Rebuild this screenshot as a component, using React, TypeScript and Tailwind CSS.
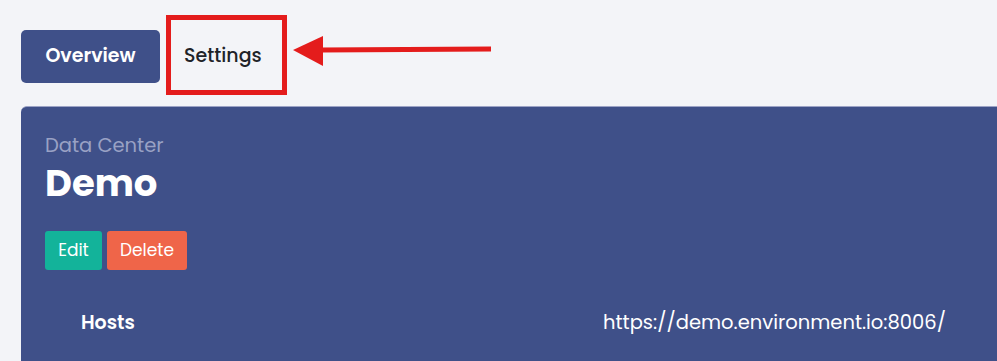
export default function App() {
  return (
    <div
      className="relative h-[361px] w-full overflow-hidden bg-[#f3f4f8]"
      style={{ fontFamily: '"Poppins", "Inter", "Open Sans", sans-serif' }}
    >
      {/* tabs */}
      <div className="flex items-center pl-[21px] pt-[30px]">
        <button className="h-[53px] w-[139px] rounded-[5px] bg-[#3f5089] text-[19px] font-semibold text-white">
          Overview
        </button>
        <button className="h-[53px] pl-[24px] text-[19px] font-medium text-[#1f2328]">
          Settings
        </button>
      </div>

      {/* annotation */}
      <div className="absolute left-[166px] top-[15px] h-[80px] w-[121px] border-[5px] border-[#e41c1c]" />
      <svg className="absolute left-[293px] top-[35px]" width="200" height="32" viewBox="0 0 200 32">
        <line x1="28" y1="15" x2="198" y2="14" stroke="#e41c1c" strokeWidth="5" />
        <polygon points="0,15 30,1 30,31" fill="#e41c1c" />
      </svg>

      {/* card */}
      <div className="ml-[21px] mt-[23px] w-[1000px] rounded-tl-[6px] border-t border-[#9ca3c6] bg-[#3f5089] pl-[24px] pt-[27px] pb-10">
        <div className="text-[19.5px] leading-[24px] text-[#99a1c4]">Data Center</div>
        <h1 className="mt-[5px] text-[37px] font-bold leading-[40px] text-white">Demo</h1>
        <div className="mt-[28px] flex gap-[5px]">
          <button className="h-[39px] w-[57px] rounded-[3px] bg-[#13b39a] text-[17px] text-white">Edit</button>
          <button className="h-[39px] w-[80px] rounded-[3px] bg-[#ef6549] text-[17px] text-white">Delete</button>
        </div>
        <div className="mt-[40px] flex h-[26px] items-center text-white">
          <div className="w-[558px] pl-[36px] text-[19px] font-semibold">Hosts</div>
          <div className="text-[19.5px]">https://demo.environment.io:8006/</div>
        </div>
      </div>
    </div>
  )
}
